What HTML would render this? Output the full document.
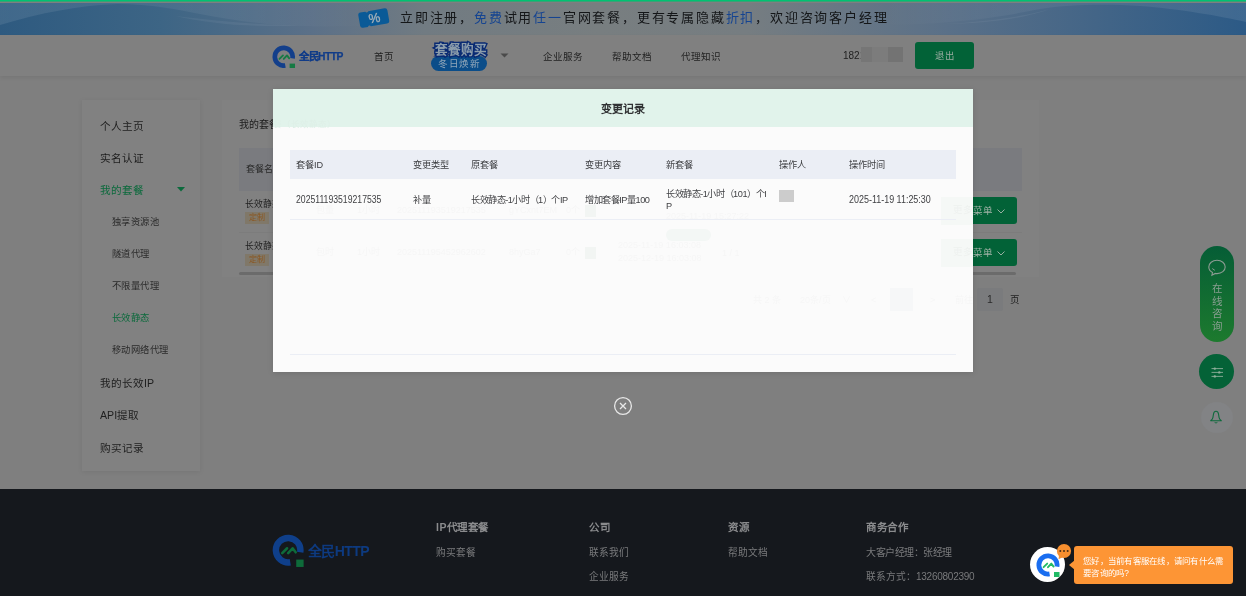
<!DOCTYPE html>
<html lang="zh-CN"><head><meta charset="utf-8">
<style>
*{margin:0;padding:0;box-sizing:border-box}
html,body{width:1246px;height:596px;overflow:hidden;background:#7f7f7f;font-family:"Liberation Sans",sans-serif;position:relative}
.a{position:absolute;white-space:nowrap}
#topline{left:0;top:0;width:1246px;height:3px;background:linear-gradient(180deg,#00c272 0,#00c272 1px,#3aa077 1px,#3aa077 2px,#7e7f7f 2px)}
#banner{left:0;top:3px;width:1246px;height:32px;background:linear-gradient(90deg,#2e5a80 0%,#3d6585 13%,#5b7088 25%,#717b82 34%,#787e80 48%,#767d81 60%,#5a7088 76%,#2c5a86 100%);overflow:hidden}
#header{left:0;top:35px;width:1246px;height:41px;background:#808080;box-shadow:0 2px 4px rgba(0,0,0,0.07)}
.nav{font-size:9.5px;color:#1e1e1e;line-height:12px}
#footer{left:0;top:489px;width:1246px;height:107px;background:#15181d}
.fh{font-size:10.5px;font-weight:bold;color:#8a8b8d;line-height:12px;letter-spacing:0.5px}
.fi{font-size:9.7px;color:#797a7c;line-height:12px}
.side{font-size:10.6px;color:#1e1e1e;line-height:13px;left:100px}
.sub{font-size:9.3px;color:#2a2a2a;line-height:12px;left:112px;letter-spacing:0.45px}
.green{color:#0b6a3c}
#modal{left:273px;top:89px;width:700px;height:283px;background:#fbfbfb;box-shadow:0 1px 6px rgba(0,0,0,0.12)}
#mhead{left:0;top:0;width:700px;height:38px;background:#e1f3eb}
.th{font-size:9.2px;color:#3c3d40;line-height:12px}
.td{font-size:9.2px;color:#404144;line-height:12px;letter-spacing:-0.25px}
</style></head><body><div id="wrap" style="position:absolute;left:0;top:0;width:1246px;height:596px;overflow:hidden;will-change:transform">
<div class="a" id="topline"></div>
<div class="a" id="banner">
  <svg class="a" style="left:0;top:-2px" width="1246" height="34" viewBox="0 0 1246 34">
    <defs>
      <linearGradient id="gl" x1="0" x2="1" y1="0" y2="0"><stop offset="0" stop-color="#fff" stop-opacity="0.09"/><stop offset="0.6" stop-color="#fff" stop-opacity="0.05"/><stop offset="1" stop-color="#fff" stop-opacity="0"/></linearGradient>
      <linearGradient id="gr" x1="0" x2="1" y1="0" y2="0"><stop offset="0" stop-color="#fff" stop-opacity="0"/><stop offset="0.4" stop-color="#fff" stop-opacity="0.05"/><stop offset="1" stop-color="#fff" stop-opacity="0.09"/></linearGradient>
    </defs>
    <path d="M0 0 V24 C 40 12, 80 4, 118 3 C 150 3, 180 9, 200 13 C 230 19, 265 24, 300 25 C 330 25.5, 350 25, 380 25 V0 Z" fill="url(#gl)"/>
    <path d="M175 15 C 220 20, 260 24, 300 24.5 C 250 26.5, 210 23, 175 15 Z" fill="#ffffff" opacity="0.05"/>
    <path d="M880 0 V24 C 960 23, 1000 16, 1040 8 C 1070 3, 1110 3, 1140 5 C 1180 8, 1220 15, 1246 21 V0 Z" fill="url(#gr)"/>
    <path d="M940 23 C 990 21, 1030 14, 1050 8 C 1030 16, 990 23, 940 23 Z" fill="#ffffff" opacity="0.05"/>
  </svg>
  <svg class="a" style="left:357px;top:3px" width="34" height="24" viewBox="0 0 34 24">
    <g transform="rotate(-10 17 12)">
      <path d="M4.5 4.3 H9.5 A1.6 1.6 0 0 0 12.5 4.3 H29 Q31.5 4.3 31.5 6.8 V17.2 Q31.5 19.7 29 19.7 H12.5 A1.6 1.6 0 0 0 9.5 19.7 H4.5 Q2 19.7 2 17.2 V6.8 Q2 4.3 4.5 4.3 Z" fill="#0a5a97"/>
      <text x="17.5" y="16.6" font-size="13" fill="#a3afb8" stroke="#a3afb8" stroke-width="0.35" text-anchor="middle" font-family="Liberation Sans">%</text>
    </g>
  </svg>
  <div class="a" style="left:400px;top:7px;font-size:13px;line-height:16px;letter-spacing:1.8px;color:#141618;font-weight:500">立即注册，<span style="color:#154491">免费</span>试用<span style="color:#154491">任一</span>官网套餐，更有专属隐藏<span style="color:#154491">折扣</span>，欢迎咨询客户经理</div>
</div>
<div class="a" id="header"></div>
<!-- logo -->
<svg class="a" style="left:272.2px;top:44.5px" width="23.5" height="23.5" viewBox="0 0 24 24">
  <path d="M20.96 13.58 A9.1 9.1 0 1 0 13.58 20.96" fill="none" stroke="#133f8b" stroke-width="4.8"/>
  <path d="M7.6 14.2 L11.2 10.6 M12 14.2 L15.3 10.6 L17.6 13.6" fill="none" stroke="#167a44" stroke-width="1.9" stroke-linecap="round" stroke-linejoin="round"/>
  <rect x="18" y="19" width="5.5" height="5.5" fill="#167a44"/>
</svg>
<div class="a" style="left:299px;top:49.5px;font-size:10.3px;line-height:13px;font-weight:bold;color:#113c88;letter-spacing:-0.5px;-webkit-text-stroke:0.25px #113c88">全民HTTP</div>
<div class="a nav" style="left:374px;top:51px">首页</div>
<!-- badge -->
<div class="a" style="left:431px;top:56px;width:56px;height:15px;border-radius:8px;background:#0b4d89"></div>
<div class="a" style="left:431px;top:56px;width:56px;height:15px;text-align:center;font-size:9.6px;line-height:15px;color:#8fa5b8;letter-spacing:0.8px;text-indent:0.8px">冬日焕新</div>
<div class="a" style="left:435px;top:42px;font-size:12.6px;line-height:16px;font-weight:900;color:#8c9dab;-webkit-text-stroke:2.8px #092a72;paint-order:stroke fill;letter-spacing:0px">套餐购买</div>
<svg class="a" style="left:500px;top:53px" width="9" height="5" viewBox="0 0 9 5"><path d="M0.5 0.5 H8.5 L4.5 4.5 Z" fill="#4a4a4a"/></svg>
<div class="a nav" style="left:543px;top:51px">企业服务</div>
<div class="a nav" style="left:612px;top:51px">帮助文档</div>
<div class="a nav" style="left:681px;top:51px">代理知识</div>
<div class="a nav" style="left:843px;top:49.5px;font-size:10px">182<span style="color:#444">1</span></div>
<div class="a" style="left:861px;top:47px;width:11px;height:15px;background:#767676"></div>
<div class="a" style="left:872px;top:47px;width:16px;height:15px;background:#7c7c7c"></div>
<div class="a" style="left:888px;top:47px;width:15px;height:15px;background:#737373"></div>
<div class="a" style="left:915px;top:42px;width:59px;height:27px;border-radius:3px;background:#026237;text-align:center;font-size:9.4px;line-height:27px;color:#9aaca1;letter-spacing:0.5px;text-indent:0.5px">退出</div>
<!-- sidebar card -->
<div class="a" style="left:82px;top:100px;width:118px;height:371px;background:#818181;box-shadow:0 1px 5px rgba(0,0,0,0.08)"></div>
<div class="a side" style="top:119.5px">个人主页</div>
<div class="a side" style="top:152px">实名认证</div>
<div class="a side green" style="top:184px">我的套餐</div>
<svg class="a" style="left:177px;top:187px" width="8" height="5" viewBox="0 0 8 5"><path d="M0 0 H8 L4 4.5 Z" fill="#0b6a3c"/></svg>
<div class="a sub" style="top:216px">独享资源池</div>
<div class="a sub" style="top:248px">隧道代理</div>
<div class="a sub" style="top:280px">不限量代理</div>
<div class="a sub green" style="top:312px">长效静态</div>
<div class="a sub" style="top:344px">移动网络代理</div>
<div class="a side" style="top:376.5px">我的长效IP</div>
<div class="a side" style="top:408.5px">API提取</div>
<div class="a side" style="top:441.5px">购买记录</div>

<!-- content card -->
<div class="a" style="left:222px;top:100px;width:817px;height:177px;background:#818181"></div>
<div class="a" style="left:239px;top:119px;font-size:10px;line-height:12px;color:#1c1c1c">我的套餐（长效静态）</div>
<div class="a" style="left:239px;top:148px;width:783px;height:43px;background:#7a7b7f"></div>
<div class="a" style="left:246px;top:163px;font-size:9px;line-height:12px;color:#2a2a2a">套餐名称</div>
<div class="a" style="left:239px;top:232px;width:783px;height:1px;background:#7c7c7c"></div>
<div class="a" style="left:245px;top:198px;font-size:8.8px;line-height:12px;color:#1e1e1e">长效静态-1小时</div>
<div class="a" style="left:245px;top:212px;width:24px;height:12px;background:#807869;font-size:8px;line-height:12px;color:#8a5620;text-align:center">定制</div>
<div class="a" style="left:245px;top:239.5px;font-size:8.8px;line-height:12px;color:#1e1e1e">长效静态-1小时</div>
<div class="a" style="left:245px;top:253.5px;width:24px;height:12px;background:#807869;font-size:8px;line-height:12px;color:#8a5620;text-align:center">定制</div>
<div class="a" style="left:239px;top:272px;width:777px;height:3px;background:#6b6b6b;border-radius:2px"></div>
<!-- green buttons -->
<div class="a" style="left:941px;top:197px;width:76px;height:27px;border-radius:3px;background:#026237;font-size:9.5px;line-height:27px;color:#a3b3a8;padding-left:12px">更多菜单</div><svg class="a" style="left:997px;top:209px" width="8" height="5" viewBox="0 0 8 5"><path d="M0.5 0.5 L4 4 L7.5 0.5" fill="none" stroke="#a9b8ae" stroke-width="0.9"/></svg>
<div class="a" style="left:941px;top:239px;width:76px;height:27px;border-radius:3px;background:#026237;font-size:9.5px;line-height:27px;color:#a3b3a8;padding-left:12px">更多菜单</div><svg class="a" style="left:997px;top:251px" width="8" height="5" viewBox="0 0 8 5"><path d="M0.5 0.5 L4 4 L7.5 0.5" fill="none" stroke="#a9b8ae" stroke-width="0.9"/></svg>
<!-- pagination -->
<div class="a" style="left:977px;top:288px;width:26px;height:23px;border-radius:2px;background:#7a7b7d;font-size:10.5px;line-height:23px;text-align:center;color:#2a2a2a">1</div>
<div class="a" style="left:1010px;top:294px;font-size:9.5px;line-height:12px;color:#222">页</div>

<!-- floating right -->
<div class="a" style="left:1200px;top:246px;width:34px;height:96px;border-radius:17px;background:linear-gradient(180deg,#055d36,#1d7a2e)"></div>
<svg class="a" style="left:1207px;top:258px" width="20" height="20" viewBox="0 0 20 20">
  <path d="M10 2.3 C5.3 2.3 1.8 5.3 1.8 9 C1.8 11.4 3.3 13.4 5.5 14.5 L4.9 17.2 L8.3 15.4 C8.9 15.5 9.4 15.6 10 15.6 C14.7 15.6 18.2 12.6 18.2 9 C18.2 5.3 14.7 2.3 10 2.3 Z" fill="none" stroke="#8c9b92" stroke-width="1.1"/>
  <path d="M5.3 10.6 L7.8 12.3" stroke="#8c9b92" stroke-width="1"/>
</svg>
<div class="a" style="left:1200px;top:282px;width:34px;text-align:center;font-size:10.5px;line-height:12.7px;color:#8a9e91;white-space:normal">在<br>线<br>咨<br>询</div>
<div class="a" style="left:1199px;top:354px;width:35px;height:35px;border-radius:50%;background:#046237"></div>
<svg class="a" style="left:1210.5px;top:365px" width="13" height="14" viewBox="0 0 13 14">
  <path d="M0.5 3.6 H12 M0.5 7.4 H12 M0.5 11.4 H12" stroke="#8fae9a" stroke-width="0.9"/>
  <circle cx="3.8" cy="3.6" r="1.2" fill="#8fae9a"/><circle cx="8.3" cy="7.4" r="1.2" fill="#8fae9a"/><circle cx="3.8" cy="11.4" r="1.2" fill="#8fae9a"/>
</svg>
<div class="a" style="left:1201px;top:401.5px;width:31.5px;height:31.5px;border-radius:50%;background:#828385"></div>
<svg class="a" style="left:1209px;top:409px" width="14" height="16" viewBox="0 0 14 16">
  <path d="M7 2.2 C5.6 2.2 4.8 3.3 4.5 5 L3.9 8.6 C3.6 10 2.7 10.9 1.7 11.7 H12.3 C11.3 10.9 10.4 10 10.1 8.6 L9.5 5 C9.2 3.3 8.4 2.2 7 2.2 Z" fill="none" stroke="#0e6a3c" stroke-width="1.1" stroke-linejoin="round"/>
  <path d="M5.6 13.4 Q7 14.6 8.4 13.4" fill="none" stroke="#0e6a3c" stroke-width="0.9"/>
</svg>
<div class="a" id="footer"></div>
<svg class="a" style="left:271.8px;top:534.4px" width="32.3" height="32.3" viewBox="0 0 24 24">
  <path d="M20.96 13.58 A9.1 9.1 0 1 0 13.58 20.96" fill="none" stroke="#0f3f8a" stroke-width="4.8"/>
  <path d="M7.6 14.2 L11.2 10.6 M12 14.2 L15.3 10.6 L17.6 13.6" fill="none" stroke="#0e6b3a" stroke-width="1.9" stroke-linecap="round" stroke-linejoin="round"/>
  <rect x="18" y="19" width="5.5" height="5.5" fill="#0e6b3a"/>
</svg>
<div class="a" style="left:308px;top:543px;font-size:14px;line-height:16px;font-weight:bold;color:#0d3a80;letter-spacing:-0.6px">全民HTTP</div>
<div class="a fh" style="left:436px;top:521px">IP代理套餐</div>
<div class="a fi" style="left:436px;top:546.5px">购买套餐</div>
<div class="a fh" style="left:589px;top:521px">公司</div>
<div class="a fi" style="left:589px;top:546.5px">联系我们</div>
<div class="a fi" style="left:589px;top:571px">企业服务</div>
<div class="a fh" style="left:728px;top:521px">资源</div>
<div class="a fi" style="left:728px;top:546.5px">帮助文档</div>
<div class="a fh" style="left:866px;top:521px">商务合作</div>
<div class="a fi" style="left:866px;top:546.5px;font-size:10px;letter-spacing:-0.5px">大客户经理：张经理</div>
<div class="a fi" style="left:866px;top:571px">联系方式：<span style="font-size:10px;letter-spacing:-0.25px">13260802390</span></div>

<!-- modal -->
<div class="a" id="modal">
  <div class="a" id="mhead"></div>
  <div class="a" style="left:0;top:0;width:700px;height:283px;color:#f6f6f6;font-size:9px;line-height:12px">
    <div class="a" style="left:0px;top:29px;color:#deefe7;font-size:8.5px">餐（长效静态）</div>
    <div class="a" style="left:43px;top:80px;color:#e7eaf1">型</div>
    <div class="a" style="left:84px;top:73px;color:#e7eaf1">IP数量</div>
    <div class="a" style="left:124px;top:73px;color:#e7eaf1">套餐ID</div>
    <div class="a" style="left:236px;top:73px;color:#e7eaf1">提取密码</div>
    <div class="a" style="left:293px;top:73px;color:#e7eaf1">白名单</div>
    <div class="a" style="left:520px;top:73px;color:#e7eaf1">状态</div>
    <div class="a" style="left:43px;top:115px">包量</div>
    <div class="a" style="left:84px;top:115px">1小时</div>
    <div class="a" style="left:124px;top:115px">202511193519217535</div>
    <div class="a" style="left:236px;top:115px">gYCxnt7EM</div>
    <div class="a" style="left:293px;top:115px">0个</div>
    <div class="a" style="left:312px;top:116px;width:11px;height:12px;background:#f2f5f3"></div>
    <div class="a" style="left:393px;top:121px">2025-11-19 15:27:22</div>
    <div class="a" style="left:393px;top:140px;width:45px;height:12px;border-radius:6px;background:#f3f7f5"></div>
    <div class="a" style="left:43px;top:157px">包时</div>
    <div class="a" style="left:84px;top:157px">1小时</div>
    <div class="a" style="left:124px;top:157px">202511195452962602</div>
    <div class="a" style="left:236px;top:157px">8hyGa7</div>
    <div class="a" style="left:293px;top:157px">0个</div>
    <div class="a" style="left:312px;top:158px;width:11px;height:12px;background:#f2f5f3"></div>
    <div class="a" style="left:345px;top:150px">2025-11-19 16:03:08</div>
    <div class="a" style="left:345px;top:163px">2025-12-19 16:03:08</div>
    <div class="a" style="left:449px;top:158px">1 / 1</div>
    <div class="a" style="left:480px;top:205px">共 2 条</div>
    <div class="a" style="left:527px;top:205px">20条/页</div><div class="a" style="left:569px;top:205px">∨</div><div class="a" style="left:598px;top:205px">&lt;</div><div class="a" style="left:657px;top:205px">&gt;</div><div class="a" style="left:682px;top:205px">前往</div>
    <div class="a" style="left:617px;top:199px;width:23px;height:23px;background:#f6f7f8"></div>
    <div class="a" style="left:668px;top:108px;width:32px;height:27.5px;background:#f5f8f6"></div>
    <div class="a" style="left:668px;top:150px;width:32px;height:27.5px;background:#f5f8f6"></div>
    <div class="a" style="left:680px;top:115px;font-size:9.5px;color:#eef1ef">更多</div>
    <div class="a" style="left:680px;top:157px;font-size:9.5px;color:#eef1ef">更多</div>
  </div>
  <div class="a" style="left:0;top:13px;width:700px;text-align:center;font-size:11px;line-height:14px;font-weight:bold;color:#303133">变更记录</div>
  <div class="a" style="left:17px;top:61px;width:666px;height:29px;background:#ebeef5"></div>
  <div class="a" style="left:17px;top:130px;width:666px;height:1px;background:#ebeef5"></div>
  <div class="a" style="left:17px;top:265px;width:666px;height:1px;background:#ebeef5"></div>
  <div class="a th" style="left:23px;top:70px">套餐ID</div>
  <div class="a th" style="left:140px;top:70px">变更类型</div>
  <div class="a th" style="left:198px;top:70px">原套餐</div>
  <div class="a th" style="left:312px;top:70px">变更内容</div>
  <div class="a th" style="left:393px;top:70px">新套餐</div>
  <div class="a th" style="left:506px;top:70px">操作人</div>
  <div class="a th" style="left:576px;top:70px">操作时间</div>
  <div class="a td" style="left:23px;top:104.5px;font-size:10.2px;letter-spacing:0px;transform:scaleX(0.85);transform-origin:0 0">202511193519217535</div>
  <div class="a td" style="left:140px;top:105px">补量</div>
  <div class="a td" style="left:198px;top:105px;letter-spacing:-0.45px">长效静态-1小时（1）个IP</div>
  <div class="a td" style="left:312px;top:105px;letter-spacing:-0.45px">增加套餐IP量100</div>
  <div class="a td" style="left:393px;top:98.5px;letter-spacing:-0.45px">长效静态-1小时（101）个I</div>
  <div class="a td" style="left:393px;top:110.5px">P</div>
  <div class="a" style="left:506px;top:101px;width:15px;height:12px;background:#cccccc"></div>
  <div class="a td" style="left:576px;top:105px;font-size:10px;letter-spacing:0px;transform:scaleX(0.895);transform-origin:0 0">2025-11-19 11:25:30</div>
</div>
<svg class="a" style="left:613px;top:396.4px" width="20" height="20" viewBox="0 0 20 20">
  <circle cx="10" cy="10" r="8.4" fill="none" stroke="#e8e8e8" stroke-width="1.3"/>
  <path d="M7 7 L13 13 M13 7 L7 13" stroke="#e8e8e8" stroke-width="1.3"/>
</svg>

<!-- chat widget -->
<div class="a" style="left:1030px;top:547px;width:35px;height:35px;border-radius:50%;background:#ffffff"></div>
<svg class="a" style="left:1035.8px;top:553px" width="24" height="24" viewBox="0 0 24 24">
  <path d="M20.96 13.58 A9.1 9.1 0 1 0 13.58 20.96" fill="none" stroke="#1a6ef0" stroke-width="4.8"/>
  <path d="M7.6 14.2 L11.2 10.6 M12 14.2 L15.3 10.6 L17.6 13.6" fill="none" stroke="#22bb66" stroke-width="1.9" stroke-linecap="round" stroke-linejoin="round"/>
  <rect x="18" y="19" width="5.5" height="5.5" fill="#22bb66"/>
</svg>
<svg class="a" style="left:1054px;top:541px" width="20" height="20" viewBox="0 0 20 20">
  <circle cx="10" cy="10" r="7.1" fill="#f78f2f"/>
  <path d="M5 13.5 L4.6 18.2 L9 16" fill="#f78f2f"/>
  <circle cx="6.3" cy="10" r="1" fill="#4a3018"/><circle cx="10" cy="10" r="1" fill="#4a3018"/><circle cx="13.7" cy="10" r="1" fill="#4a3018"/>
</svg>
<svg class="a" style="left:1069px;top:560px" width="6" height="10" viewBox="0 0 6 10"><path d="M6 0 V10 L0 5 Z" fill="#fd9535"/></svg>
<div class="a" style="left:1074px;top:546px;width:159px;height:38px;border-radius:3px;background:#fd9535"></div>
<div class="a" style="left:1083px;top:556px;width:150px;font-size:8.4px;letter-spacing:0.25px;line-height:11.5px;color:#ffffff;white-space:normal">您好，当前有客服在线，请问有什么需<br>要咨询的吗?</div>
</div></body></html>
